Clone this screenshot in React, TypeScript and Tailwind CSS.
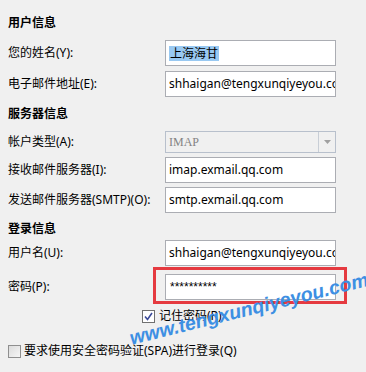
import React from 'react';

const font = { fontFamily: '"Noto Sans", "Noto Sans CJK SC", sans-serif' };

const Field = ({ label, value, selected, mask }: { label: string; value: string; selected?: boolean; mask?: boolean }) => (
  <div className="flex items-center h-[26px]">
    <span className="w-[157px] shrink-0">{label}</span>
    <div className="w-[171px] h-[26px] border border-[#abadb3] bg-white flex items-center px-[3px] overflow-hidden whitespace-nowrap">
      {selected ? (
        <span className="bg-[#99c9f2] leading-[15px] px-[1px]">{value}</span>
      ) : mask ? (
        <span className="pl-[1px]" style={{ fontFamily: '"Liberation Sans", Arial, sans-serif' }}>{value}</span>
      ) : (
        <span>{value}</span>
      )}
    </div>
  </div>
);

const Header = ({ children }: { children: React.ReactNode }) => (
  <div className="font-bold h-[20px] flex items-center">{children}</div>
);

export default function App() {
  return (
    <div className="relative w-[366px] h-[372px] bg-[#f0f0f0] text-[12px] text-black overflow-hidden" style={font}>
      <div className="pl-[8px] pt-[13px] flex flex-col">
        <Header>用户信息</Header>
        <div className="mt-[7px] flex flex-col gap-[5px]">
          <Field label="您的姓名(Y):" value="上海海甘" selected />
          <Field label="电子邮件地址(E):" value="shhaigan@tengxunqiyeyou.com" />
        </div>

        <div className="mt-[7px]">
          <Header>服务器信息</Header>
        </div>
        <div className="mt-[7px] flex flex-col gap-[4px]">
          <div className="flex items-center h-[22px]">
            <span className="w-[157px] shrink-0">帐户类型(A):</span>
            <div className="w-[171px] h-[22px] border border-[#b8c0cc] bg-[#f0f0f0] flex items-center text-[#838383]">
              <span className="flex-1 px-[3px]" style={{ fontFamily: '"Liberation Serif", serif' }}>IMAP</span>
              <div className="w-[17px] h-[20px] border-l border-[#c8ced6] flex items-center justify-center">
                <svg width="7" height="4" viewBox="0 0 7 4"><path d="M0 0h7L3.5 4z" fill="#a0a0a0" /></svg>
              </div>
            </div>
          </div>
          <Field label="接收邮件服务器(I):" value="imap.exmail.qq.com" />
          <Field label="发送邮件服务器(SMTP)(O):" value="smtp.exmail.qq.com" />
        </div>

        <div className="mt-[6px]">
          <Header>登录信息</Header>
        </div>
        <div className="mt-[1px] flex flex-col gap-[8px]">
          <Field label="用户名(U):" value="shhaigan@tengxunqiyeyou.com" />
          <Field label="密码(P):" value="**********" mask />
        </div>

        <div className="mt-[9px] flex items-center h-[14px] pl-[134px] gap-[4px]">
          <div className="w-[13px] h-[13px] border border-[#707070] bg-white flex items-center justify-center">
            <svg width="9" height="9" viewBox="0 0 9 9">
              <path d="M1 4.5 L3.5 7.5 L8 1" stroke="#3b4a99" strokeWidth="1.6" fill="none" />
            </svg>
          </div>
          <span>记住密码(R)</span>
        </div>

        <div className="mt-[21px] flex items-center h-[14px] gap-[3px]">
          <div className="w-[13px] h-[13px] border border-[#8f8f8f] bg-gradient-to-br from-[#dcdcdc] to-[#f6f6f6]" />
          <span>要求使用安全密码验证(SPA)进行登录(Q)</span>
        </div>
      </div>

      <div className="absolute left-[153px] top-[267px] w-[194px] h-[37px] border-[3px] border-[#e53a40]" />

      <div
        className="absolute left-[130px] top-[324px] origin-left -rotate-[14deg] text-[19.5px] font-bold italic text-[#3d8fe3] whitespace-nowrap"
        style={{ fontFamily: '"Liberation Sans", Arial, sans-serif' }}
      >
        www.tengxunqiyeyou.com
      </div>
    </div>
  );
}
